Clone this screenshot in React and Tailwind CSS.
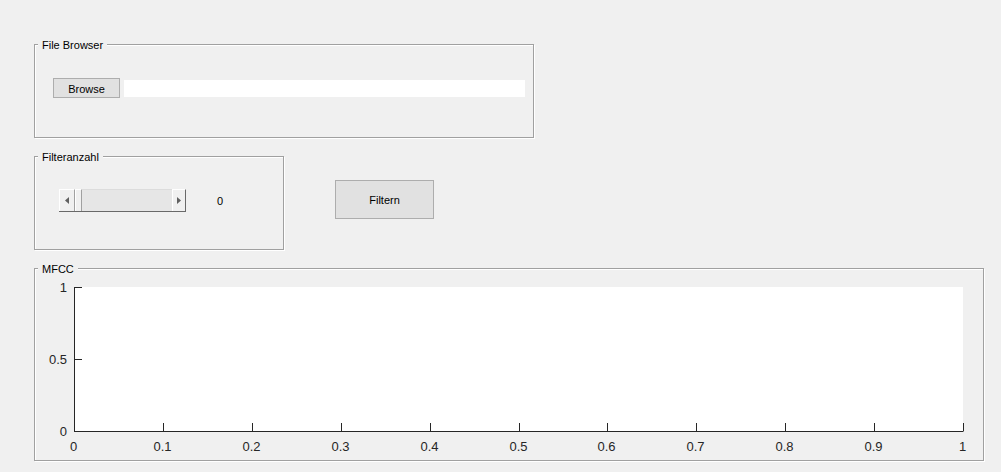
import React from "react";

const Panel = ({ title, className, children }) => {
  return (
    <div className={`relative border border-[#a0a0a0] shadow-[inset_1px_1px_0_#ffffff,1px_1px_0_#ffffff] ${className}`}>
      <span className="absolute top-[-7px] left-[3px] px-[4px] bg-[#f0f0f0] text-[11px] leading-[14px] text-black">{title}</span>
      {children}
    </div>
  );
};

const Arrow = ({ dir }) => (
  <svg width="4" height="7" viewBox="0 0 4 7">
    {dir === "left" ? <path d="M4 0 L0 3.5 L4 7 Z" fill="#606060" /> : <path d="M0 0 L4 3.5 L0 7 Z" fill="#606060" />}
  </svg>
);

const Chart = () => {
  const left = 39, right = 928, top = 18, bottom = 162;
  const xs = [0, 0.1, 0.2, 0.3, 0.4, 0.5, 0.6, 0.7, 0.8, 0.9, 1];
  const ys = [0, 0.5, 1];
  return (
    <svg width="950" height="192" className="block" style={{ fontFamily: '"Liberation Sans", Arial, sans-serif' }}>
      <rect x={left} y={top} width={right - left} height={bottom - top} fill="#ffffff" />
      <line x1={left + 0.5} y1={top} x2={left + 0.5} y2={bottom + 0.5} stroke="#262626" />
      <line x1={left} y1={bottom + 0.5} x2={right + 0.5} y2={bottom + 0.5} stroke="#262626" />
      {xs.map((v) => {
        const x = Math.round(left + (right - left) * v) + 0.5;
        return (
          <g key={v}>
            <line x1={x} y1={bottom} x2={x} y2={bottom - 8} stroke="#262626" />
            <text x={x - 1} y={182} fontSize="13" textAnchor="middle" fill="#262626">{v}</text>
          </g>
        );
      })}
      {ys.map((v) => {
        const y = Math.round(bottom - (bottom - top) * v) + 0.5;
        return (
          <g key={v}>
            <line x1={left} y1={y} x2={left + 8} y2={y} stroke="#262626" />
            <text x={32} y={y + 4} fontSize="13" textAnchor="end" fill="#262626">{v}</text>
          </g>
        );
      })}
    </svg>
  );
};

export default function App() {
  return (
    <div className="w-[1001px] h-[472px] bg-[#f0f0f0] pt-[44px] pl-[34px] overflow-hidden text-black" style={{ fontFamily: '"Liberation Sans", Arial, sans-serif' }}>
      <Panel title="File Browser" className="w-[500px] h-[94px]">
        <div className="flex items-center gap-[4px] pt-[33px] pl-[18px]">
          <button className="w-[67px] h-[20px] pt-[2px] bg-[#e1e1e1] border border-[#adadad] text-[11px] leading-none">Browse</button>
          <div className="w-[401px] h-[17px] bg-white" />
        </div>
      </Panel>

      <div className="flex items-start mt-[18px]">
        <Panel title="Filteranzahl" className="w-[250px] h-[94px]">
          <div className="flex items-center pt-[32px] pl-[24px]">
            <div className="flex h-[23px] w-[127px] border-b border-[#696969]">
              <div className="w-[16px] h-full flex items-center justify-center bg-[#f0f0f0] border-t border-l border-white border-r border-r-[#a0a0a0]">
                <Arrow dir="left" />
              </div>
              <div className="w-[7px] h-full bg-[#f0f0f0] border-t border-l border-white border-r border-r-[#a0a0a0]" />
              <div className="flex-1 h-full bg-[#e6e6e6] border-t border-[#dcdcdc]" />
              <div className="w-[14px] h-full flex items-center justify-center bg-[#f0f0f0] border-t border-l border-white border-r border-r-[#696969]">
                <Arrow dir="right" />
              </div>
            </div>
            <span className="ml-[31px] pt-[2px] text-[11px] leading-none text-black">0</span>
          </div>
        </Panel>
        <button className="ml-[51px] mt-[24px] w-[99px] h-[39px] pt-[2px] bg-[#e1e1e1] border border-[#adadad] text-[11px] leading-none">Filtern</button>
      </div>

      <Panel title="MFCC" className="w-[950px] h-[193px] mt-[18px]">
        <Chart />
      </Panel>
    </div>
  );
}
